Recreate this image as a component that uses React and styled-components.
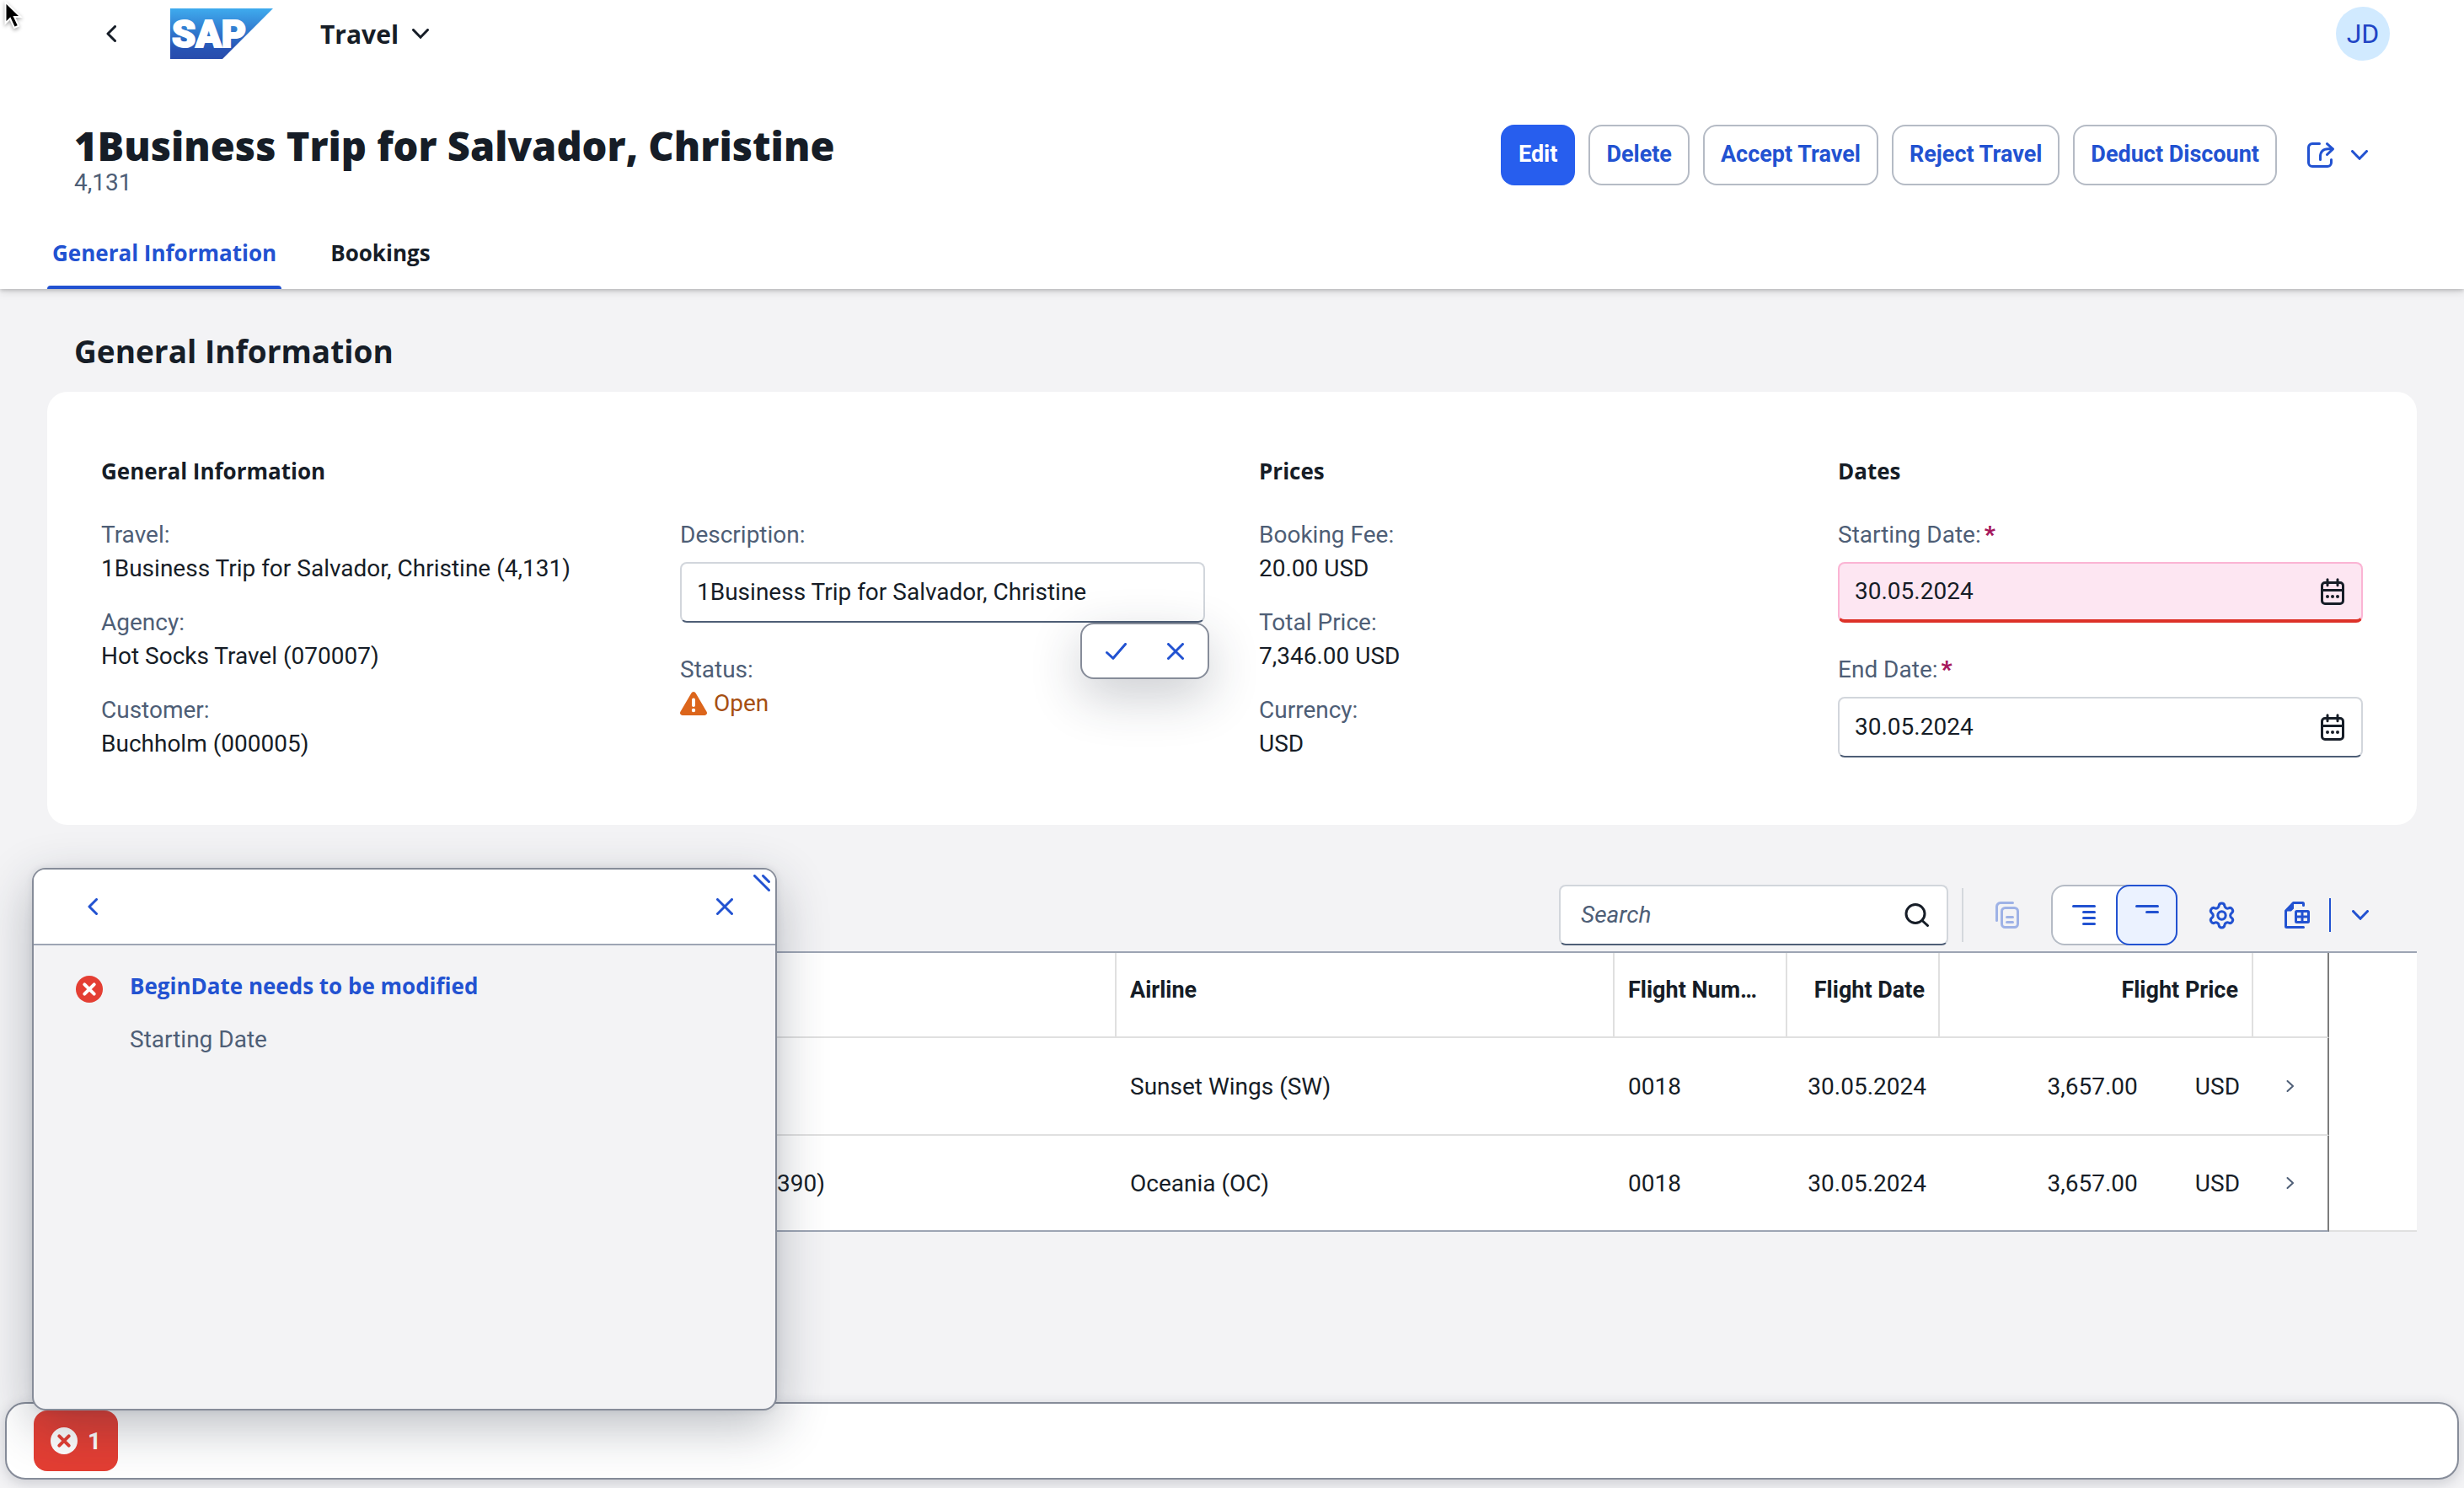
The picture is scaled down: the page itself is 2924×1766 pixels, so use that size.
import React, { useState } from "react";
import styled, { createGlobalStyle, css } from "styled-components";

const c = {
  page: "#f3f3f5",
  text: "#161d27",
  label: "#4e5e76",
  link: "#2252d1",
  brand: "#275eee",
  line: "#9da5b4",
  softLine: "#e0e0e0",
  fieldLine: "#d2d6dc",
  popLine: "#868c99",
  red: "#e43e33",
};

const headingFont = `"Open Sans", "Noto Sans", sans-serif`;

const GlobalStyle = createGlobalStyle`
  *, *::before, *::after { box-sizing: border-box; }
  body { margin: 0; background: ${c.page}; }
  body, button, input, table { font-family: Roboto, "Noto Sans", sans-serif; font-size: 28px; color: ${c.text}; }
  svg { display: block; flex: none; }
  h1, h2, h3, p, dl, dd { margin: 0; }
`;

/* ---------- icons ---------- */

const Stroke = ({ w, h, sw = 3, children }) => (
  <svg width={w} height={h} viewBox={`0 0 ${w} ${h}`} fill="none" stroke="currentColor" strokeWidth={sw} strokeLinecap="round" strokeLinejoin="round" aria-hidden="true">
    {children}
  </svg>
);

const ChevronDown = () => (
  <Stroke w={20} h={12}><path d="M1.5 1.5 10 10.3 18.5 1.5" /></Stroke>
);
const ChevronLeft = () => (
  <Stroke w={12} h={20}><path d="M10.5 1.5 2 10l8.500 8.500" /></Stroke>
);
const ChevronRight = () => (
  <Stroke w={10} h={16} sw={2}><path d="M1.500 2 8 8l-6.500 6" /></Stroke>
);
const CloseIcon = () => (
  <Stroke w={20} h={20}><path d="M1.500 1.500l17 17M18.500 1.500l-17 17" /></Stroke>
);
const CheckIcon = () => (
  <Stroke w={25} h={20}><path d="M1.500 11.500 9 18.300 23.500 1.500" /></Stroke>
);
const ShareIcon = () => (
  <Stroke w={32} h={30}>
    <path d="M14.500 1.500H6A4.500 4.500 0 0 0 1.500 6v18A4.500 4.500 0 0 0 6 28.500h18a4.500 4.500 0 0 0 4.500-4.500v-3.500" />
    <path d="M15.500 20.500V17c0-6 3.500-9.200 9-9.200H30" />
    <path d="M23.500 1.700 30.400 7.800 23.500 14.500" />
  </Stroke>
);
const CalendarIcon = () => (
  <Stroke w={28} h={32}>
    <rect x="1.500" y="5.500" width="25" height="25" rx="3.500" />
    <path d="M2 14.500h24M8 1.700v7M20 1.700v7" />
    <g fill="currentColor" stroke="none">
      <circle cx="8" cy="22" r="2" /><circle cx="14" cy="22" r="2" /><circle cx="20" cy="22" r="2" />
    </g>
  </Stroke>
);
const SearchIcon = () => (
  <Stroke w={30} h={28}>
    <circle cx="13" cy="12.500" r="11" /><path d="M21 20.500l6.500 6" />
  </Stroke>
);
const CopyIcon = () => (
  <Stroke w={28} h={32}>
    <path d="M1.500 22.500V6A4.500 4.500 0 0 1 6 1.500h14.500" />
    <rect x="7.500" y="7.500" width="19" height="23" rx="4" />
    <path d="M13.500 18.500h7M13.500 24.500h7" />
  </Stroke>
);
const ExpandTreeIcon = () => (
  <Stroke w={28} h={32}>
    <path d="M1.500 5.500h25M13.500 12.500h13M13.500 19.500h13M13.500 26.500h13" />
  </Stroke>
);
const CollapseTreeIcon = () => (
  <Stroke w={28} h={32}><path d="M1.500 5.500h25M13.500 12.500h13" /></Stroke>
);
const GearIcon = () => (
  <svg width="35" height="35" viewBox="0 0 24 24" fill="none" stroke="currentColor" strokeWidth="2.1" strokeLinecap="round" strokeLinejoin="round" aria-hidden="true">
    <path d="M9.671 4.136a2.340 2.340 0 0 1 4.659 0 2.340 2.340 0 0 0 3.319 1.915 2.340 2.340 0 0 1 2.330 4.033 2.340 2.340 0 0 0 0 3.831 2.340 2.340 0 0 1-2.330 4.033 2.340 2.340 0 0 0-3.319 1.915 2.340 2.340 0 0 1-4.659 0 2.340 2.340 0 0 0-3.320-1.915 2.340 2.340 0 0 1-2.330-4.033 2.340 2.340 0 0 0 0-3.831A2.340 2.340 0 0 1 6.350 6.051a2.340 2.340 0 0 0 3.319-1.915" />
    <circle cx="12" cy="12" r="3.200" />
  </svg>
);
const ExportIcon = () => (
  <Stroke w={30} h={32}>
    <path d="M22.500 4.500v-2a1 1 0 0 0-1-1H10.500l-9 9.500v18.500a1 1 0 0 0 1 1h20" />
    <path d="M2 10.500h5.500l2.500-2.500V2.500z" fill="currentColor" strokeWidth="2" />
    <rect x="13.500" y="11.500" width="15" height="13" rx="1" />
    <path d="M21 11.500v13M13.500 18h15" />
  </Stroke>
);
const ResizeIcon = () => (
  <Stroke w={20} h={20}><path d="M1.500 1.500l17 17M11.500 1.500l7 7" /></Stroke>
);
const WarningIcon = () => (
  <svg width="32" height="28" viewBox="0 0 32 28" aria-hidden="true">
    <path d="M13.300 1.700a3.100 3.100 0 0 1 5.400 0l12.900 22.100A2.800 2.800 0 0 1 29.200 28H2.800a2.800 2.800 0 0 1-2.400-4.200z" fill="#dc651b" />
    <path d="M16 9.500v6.500" stroke="#fff" strokeWidth="4" strokeLinecap="round" />
    <circle cx="16" cy="22" r="2.200" fill="#fff" />
  </svg>
);
const ErrorIcon = ({ fill, mark }) => (
  <svg width="32" height="32" viewBox="0 0 32 32" aria-hidden="true">
    <circle cx="16" cy="16" r="16" fill={fill} />
    <path d="M10.300 10.300l11.400 11.400M21.700 10.300 10.300 21.700" stroke={mark} strokeWidth="4" strokeLinecap="round" />
  </svg>
);
const SapLogo = () => (
  <svg width="122" height="60" viewBox="0 0 122 60" role="img" aria-label="SAP">
    <defs>
      <linearGradient id="sap" x1="0" y1="0" x2="0" y2="1">
        <stop offset="0" stopColor="#3fabee" />
        <stop offset="0.500" stopColor="#2f74cb" />
        <stop offset="0.800" stopColor="#2753b4" />
        <stop offset="1" stopColor="#284cac" />
      </linearGradient>
    </defs>
    <path d="M0 0h122L62 60H0z" fill="url(#sap)" />
    <text x="2" y="46" fill="#fff" stroke="#fff" strokeWidth="2" fontFamily="Roboto, sans-serif" fontWeight="900" fontSize="45">SAP</text>
  </svg>
);

const Pointer = styled.svg`
  position: absolute;
  left: 4px;
  top: 0;
  z-index: 5;
  filter: drop-shadow(0 2px 2px rgba(0, 0, 0, 0.35));
`;

/* ---------- page frame ---------- */

const Page = styled.div`
  min-height: 100vh;
  display: flex;
  flex-direction: column;
  background: ${c.page};
`;

const Header = styled.header`
  background: #fff;
  box-shadow: 0 2px 4px rgba(0, 0, 0, 0.16), 0 4px 10px rgba(0, 0, 0, 0.1);
`;

const ShellBar = styled.div`
  display: flex;
  align-items: center;
  height: 80px;
  padding: 0 88px 0 108px;
`;

const PlainButton = styled.button`
  display: flex;
  align-items: center;
  justify-content: ${(p) => p.$align || "center"};
  width: ${(p) => p.$width || "auto"};
  height: ${(p) => p.$height || "72px"};
  padding: 0;
  border: 0;
  background: none;
  color: ${(p) => p.$color || c.link};
  opacity: ${(p) => (p.disabled ? 0.4 : 1)};
`;

const LogoLink = styled.a`
  margin: 0 56px 0 46px;
`;

const AppMenu = styled.button`
  display: flex;
  align-items: center;
  gap: 16px;
  padding: 0;
  border: 0;
  background: none;
  font-family: ${headingFont};
  font-size: 30px;
  font-weight: 700;
`;

const Avatar = styled.button`
  width: 64px;
  height: 64px;
  margin-left: auto;
  padding: 0;
  border: 0;
  border-radius: 50%;
  background: #d1eaff;
  color: #2145c5;
  font-size: 32px;
`;

const TitleRow = styled.div`
  display: flex;
  justify-content: space-between;
  align-items: flex-start;
  padding: 65px 88px 0;
`;

const Title = styled.h1`
  font-family: ${headingFont};
  font-size: 47px;
  line-height: 56px;
  font-weight: 800;
`;

const Subtitle = styled.p`
  line-height: 32px;
  color: ${c.label};
`;

const Actions = styled.div`
  display: flex;
  gap: 16px;
  padding-top: 3px;
`;

const ShareGroup = styled.div`
  display: flex;
`;

const ActionButton = styled.button`
  height: 72px;
  padding: 0 19px 2px;
  border: 2px solid ${(p) => (p.$primary ? c.brand : "#b5bbc5")};
  border-radius: 16px;
  background: ${(p) => (p.$primary ? c.brand : "#fff")};
  color: ${(p) => (p.$primary ? "#fff" : c.link)};
  font-size: 27px;
  font-weight: 700;
  white-space: nowrap;
`;

const Tabs = styled.nav`
  display: flex;
  gap: 52px;
  padding: 24px 56px 0;
`;

const Tab = styled.a`
  position: relative;
  padding: 0 6px;
  line-height: 86px;
  font-family: ${headingFont};
  font-size: 26px;
  font-weight: 700;
  text-decoration: none;
  color: ${(p) => (p.$active ? c.link : c.text)};
  ${(p) => p.$active && css`
    &::after {
      content: "";
      position: absolute;
      inset: auto 0 0;
      height: 4px;
      border-radius: 4px 4px 0 0;
      background: ${c.link};
    }
  `}
`;

/* ---------- general information ---------- */

const Main = styled.main`
  flex: 1;
  padding: 50px 56px 0;
`;

const SectionTitle = styled.h2`
  padding-left: 32px;
  margin-bottom: 24px;
  font-family: ${headingFont};
  font-size: 37px;
  font-weight: 700;
  line-height: 48px;
`;

const Card = styled.section`
  display: grid;
  grid-template-columns: 2fr 1fr 1fr;
  padding: 74px 32px 76px;
  border-radius: 24px;
  background: #fff;
`;

const Group = styled.div`
  min-width: 0;
`;

const GroupTitle = styled.h3`
  padding: 0 32px;
  margin-bottom: 36px;
  font-family: ${headingFont};
  font-size: 26px;
  font-weight: 700;
  line-height: 40px;
`;

const GroupColumns = styled.div`
  display: grid;
  grid-template-columns: repeat(${(p) => p.$count}, 1fr);
`;

const FieldList = styled.div`
  display: flex;
  flex-direction: column;
  gap: ${(p) => (p.$editable ? "36px" : "24px")};
  padding: 0 32px;
`;

const Field = styled.div`
  position: relative;
  line-height: 40px;
`;

const Label = styled.label`
  display: block;
  margin-bottom: ${(p) => (p.$editable ? "12px" : "0")};
  color: ${c.label};
`;

const Required = styled.span`
  margin-left: 4px;
  color: #a6175c;
  font-weight: 900;
`;

const InputFrame = styled.div`
  display: flex;
  align-items: center;
  height: 72px;
  padding: 0 20px 0 18px;
  border: 2px solid ${c.fieldLine};
  border-bottom-color: ${c.label};
  border-radius: 8px;
  background: #fff;
  ${(p) => p.$error && css`
    border-color: #fbb4d4;
    border-bottom: 4px solid #dd3128;
    background: #fde6f2;
  `}
`;

const TextInput = styled.input`
  flex: 1;
  min-width: 0;
  padding: 0 0 2px;
  border: 0;
  outline: 0;
  background: none;
  &::placeholder { color: ${c.label}; font-style: italic; opacity: 1; }
`;

const Status = styled.div`
  display: flex;
  align-items: center;
  gap: 8px;
  color: #a64f12;
`;

const ConfirmPopover = styled.div`
  position: absolute;
  top: 100%;
  right: -5px;
  z-index: 1;
  display: flex;
  padding: 0 4px;
  border: 2px solid ${c.popLine};
  border-radius: 16px;
  background: #fff;
  box-shadow: 0 20px 60px rgba(34, 42, 60, 0.24);
`;

/* ---------- bookings ---------- */

const Toolbar = styled.div`
  display: flex;
  align-items: center;
  justify-content: flex-end;
  gap: 16px;
  margin-top: 71px;
  padding: 0 32px 7px 0;
`;

const SearchFrame = styled(InputFrame)`
  width: 462px;
  padding-left: 24px;
`;

const Separator = styled.span`
  width: 2px;
  height: ${(p) => p.$height};
  background: ${(p) => p.$color};
`;

const Segments = styled.div`
  display: flex;
  border-radius: 16px;
  background: #fff;
  box-shadow: inset 0 0 0 2px #b5bbc5;
`;

const Segment = styled.button`
  display: flex;
  align-items: center;
  justify-content: center;
  width: ${(p) => (p.$selected ? "73px" : "77px")};
  height: 72px;
  padding: 0;
  border: 2px solid ${(p) => (p.$selected ? c.link : "transparent")};
  border-radius: 16px;
  background: ${(p) => (p.$selected ? "#ebf2ff" : "none")};
  color: ${c.link};
`;

const ExportGroup = styled.div`
  display: flex;
  align-items: center;
`;

const Table = styled.table`
  width: 100%;
  table-layout: fixed;
  border-collapse: separate;
  border-spacing: 0;
  border-top: 2px solid ${c.line};
  background: #fff;
`;

const Col = styled.col`
  width: ${(p) => p.$width};
`;

const HeadCell = styled.th`
  height: 101px;
  padding: 0 ${(p) => (p.$end ? "16px" : "24px")} 12px 16px;
  border-bottom: 2px solid ${(p) => (p.$blank ? "transparent" : c.softLine)};
  border-right: ${(p) => (p.$blank ? "0" : `2px solid ${p.$last ? "#7d7d7d" : c.softLine}`)};
  font-size: 27px;
  font-weight: 700;
  text-align: ${(p) => (p.$end ? "right" : "left")};
  white-space: nowrap;
  overflow: hidden;
  text-overflow: ellipsis;
`;

const Cell = styled.td`
  height: ${(p) => (p.$bottom ? "114px" : "116px")};
  padding: 0 16px;
  border-bottom: 2px solid ${(p) => (p.$bottom ? (p.$blank ? c.softLine : c.line) : p.$blank ? "transparent" : c.softLine)};
  border-right: ${(p) => (p.$last ? "2px solid #7d7d7d" : "0")};
  text-align: ${(p) => (p.$end ? "right" : "left")};
  white-space: nowrap;
`;

const CustomerCell = styled(Cell)`
  padding-right: 346px;
`;

const Amount = styled.span`
  display: flex;
  justify-content: flex-end;
  gap: 68px;
`;

/* ---------- footer & messages ---------- */

const Footer = styled.footer`
  display: flex;
  align-items: flex-start;
  height: 92px;
  margin: 0 6px 10px;
  padding: 8px 32px;
  border: 2px solid ${c.popLine};
  border-radius: 24px;
  background: #fff;
  box-shadow: 0 4px 16px rgba(34, 42, 60, 0.2);
`;

const MessageAnchor = styled.div`
  position: relative;
`;

const MessageButton = styled.button`
  display: flex;
  align-items: center;
  gap: 12px;
  height: 72px;
  padding: 0 20px;
  border: 0;
  border-radius: 16px;
  background: ${c.red};
  color: #fff;
  font-weight: 700;
`;

const MessagePopover = styled.section`
  position: absolute;
  left: -2px;
  bottom: 100%;
  z-index: 2;
  width: 884px;
  height: 644px;
  border: 2px solid ${c.popLine};
  border-radius: 16px;
  background: ${c.page};
  box-shadow: 0 20px 60px rgba(34, 42, 60, 0.3), 0 0 8px rgba(34, 42, 60, 0.1);
  overflow: hidden;
`;

const MessageLayer = styled.div`
  display: flex;
  flex-direction: column;
  height: 100%;
`;

const MessageHeader = styled.div`
  display: flex;
  justify-content: space-between;
  height: 90px;
  padding: 0 24px 0 34px;
  border-bottom: 2px solid ${c.line};
  background: #fff;
`;

const ResizeHandle = styled.span`
  position: absolute;
  top: 6px;
  right: 6px;
  color: ${c.link};
`;

const MessageItem = styled.div`
  display: flex;
  gap: 32px;
  padding: 32px 50px;
`;

const MessageIcon = styled.span`
  padding-top: 4px;
`;

const MessageLink = styled.a`
  display: block;
  line-height: 32px;
  margin-bottom: 32px;
  color: ${c.link};
  font-family: ${headingFont};
  font-size: 26px;
  font-weight: 700;
  text-decoration: none;
`;

const MessageNote = styled.p`
  line-height: 32px;
  color: ${c.label};
`;

/* ---------- parts ---------- */

const ReadField = ({ label, children }) => (
  <Field>
    <Label as="div">{label}:</Label>
    <div>{children}</div>
  </Field>
);

const DateField = ({ id, label, error, initial }) => {
  const [value, setValue] = useState(initial);
  return (
    <Field>
      <Label htmlFor={id} $editable>{label}:<Required>*</Required></Label>
      <InputFrame $error={error}>
        <TextInput id={id} value={value} onChange={(e) => setValue(e.target.value)} aria-invalid={error} />
        <PlainButton $color={c.text} $height="64px" aria-label={`Open calendar for ${label}`}><CalendarIcon /></PlainButton>
      </InputFrame>
    </Field>
  );
};

const bookings = [
  { customer: "", airline: "Sunset Wings (SW)", number: "0018", date: "30.05.2024", price: "3,657.00", currency: "USD" },
  { customer: "(000390)", airline: "Oceania (OC)", number: "0018", date: "30.05.2024", price: "3,657.00", currency: "USD" },
];

export default function App() {
  const [description, setDescription] = useState("1Business Trip for Salvador, Christine");
  return (
    <Page>
      <GlobalStyle />
      <Pointer width="28" height="40" viewBox="0 0 28 40" aria-hidden="true">
        <path d="M2.500 2.500v25l5.500-5.500 5 11 5-2.300-5-10.700h7.500z" fill="#000" stroke="#fff" strokeWidth="2" />
      </Pointer>
      <Header>
        <ShellBar>
          <PlainButton $color={c.text} $width="48px" aria-label="Back"><ChevronLeft /></PlainButton>
          <LogoLink href="#home"><SapLogo /></LogoLink>
          <AppMenu>Travel<ChevronDown /></AppMenu>
          <Avatar aria-label="Profile">JD</Avatar>
        </ShellBar>
        <TitleRow>
          <div>
            <Title>1Business Trip for Salvador, Christine</Title>
            <Subtitle>4,131</Subtitle>
          </div>
          <Actions>
            <ActionButton $primary>Edit</ActionButton>
            <ActionButton>Delete</ActionButton>
            <ActionButton>Accept Travel</ActionButton>
            <ActionButton>Reject Travel</ActionButton>
            <ActionButton>Deduct Discount</ActionButton>
            <ShareGroup>
              <PlainButton $width="72px" aria-label="Share"><ShareIcon /></PlainButton>
              <PlainButton $width="46px" $align="flex-start" aria-label="More share options"><ChevronDown /></PlainButton>
            </ShareGroup>
          </Actions>
        </TitleRow>
        <Tabs>
          <Tab href="#general" $active>General Information</Tab>
          <Tab href="#bookings">Bookings</Tab>
        </Tabs>
      </Header>

      <Main>
        <SectionTitle id="general">General Information</SectionTitle>
        <Card>
          <Group>
            <GroupTitle>General Information</GroupTitle>
            <GroupColumns $count={2}>
              <FieldList>
                <ReadField label="Travel">1Business Trip for Salvador, Christine (4,131)</ReadField>
                <ReadField label="Agency">Hot Socks Travel (070007)</ReadField>
                <ReadField label="Customer">Buchholm (000005)</ReadField>
              </FieldList>
              <FieldList $editable>
                <Field>
                  <Label htmlFor="description" $editable>Description:</Label>
                  <InputFrame>
                    <TextInput id="description" value={description} onChange={(e) => setDescription(e.target.value)} />
                  </InputFrame>
                  <ConfirmPopover>
                    <PlainButton $width="73px" $height="63px" aria-label="Apply"><CheckIcon /></PlainButton>
                    <PlainButton $width="68px" $height="63px" aria-label="Discard"><CloseIcon /></PlainButton>
                  </ConfirmPopover>
                </Field>
                <ReadField label="Status"><Status><WarningIcon />Open</Status></ReadField>
              </FieldList>
            </GroupColumns>
          </Group>
          <Group>
            <GroupTitle>Prices</GroupTitle>
            <FieldList>
              <ReadField label="Booking Fee">20.00 USD</ReadField>
              <ReadField label="Total Price">7,346.00 USD</ReadField>
              <ReadField label="Currency">USD</ReadField>
            </FieldList>
          </Group>
          <Group>
            <GroupTitle>Dates</GroupTitle>
            <FieldList $editable>
              <DateField id="start" label="Starting Date" initial="30.05.2024" error />
              <DateField id="end" label="End Date" initial="30.05.2024" />
            </FieldList>
          </Group>
        </Card>

        <Toolbar id="bookings">
          <SearchFrame>
            <TextInput type="text" placeholder="Search" aria-label="Search" />
            <PlainButton $color={c.text} $height="64px" aria-label="Start search"><SearchIcon /></PlainButton>
          </SearchFrame>
          <Separator $height="64px" $color="#d5d8dd" />
          <PlainButton $width="72px" disabled aria-label="Copy"><CopyIcon /></PlainButton>
          <Segments>
            <Segment aria-label="Show more columns"><ExpandTreeIcon /></Segment>
            <Segment $selected aria-label="Show fewer columns"><CollapseTreeIcon /></Segment>
          </Segments>
          <PlainButton $width="72px" aria-label="Settings"><GearIcon /></PlainButton>
          <ExportGroup>
            <PlainButton $width="76px" aria-label="Export"><ExportIcon /></PlainButton>
            <Separator $height="40px" $color={c.link} />
            <PlainButton $width="70px" aria-label="Export options"><ChevronDown /></PlainButton>
          </ExportGroup>
        </Toolbar>

        <Table>
          <colgroup>
            <Col />
            <Col $width="591px" />
            <Col $width="205px" />
            <Col $width="181px" />
            <Col $width="372px" />
            <Col $width="90px" />
            <Col $width="104px" />
          </colgroup>
          <thead>
            <tr>
              <HeadCell />
              <HeadCell>Airline</HeadCell>
              <HeadCell>Flight Number</HeadCell>
              <HeadCell $end>Flight Date</HeadCell>
              <HeadCell $end>Flight Price</HeadCell>
              <HeadCell $last />
              <HeadCell $blank />
            </tr>
          </thead>
          <tbody>
            {bookings.map((b, i) => {
              const bottom = i === bookings.length - 1;
              return (
                <tr key={b.airline}>
                  <CustomerCell $bottom={bottom} $end>{b.customer}</CustomerCell>
                  <Cell $bottom={bottom}>{b.airline}</Cell>
                  <Cell $bottom={bottom}>{b.number}</Cell>
                  <Cell $bottom={bottom} $end>{b.date}</Cell>
                  <Cell $bottom={bottom} $end><Amount><span>{b.price}</span><span>{b.currency}</span></Amount></Cell>
                  <Cell $bottom={bottom} $last>
                    <PlainButton $width="56px" $color={c.label} aria-label={`Open ${b.airline}`}><ChevronRight /></PlainButton>
                  </Cell>
                  <Cell $bottom={bottom} $blank />
                </tr>
              );
            })}
          </tbody>
        </Table>
      </Main>

      <Footer>
        <MessageAnchor>
          <MessageButton aria-label="1 error"><ErrorIcon fill="#fff" mark={c.red} />1</MessageButton>
          <MessagePopover>
            <MessageLayer>
              <MessageHeader>
                <PlainButton $width="72px" $height="88px" aria-label="Back to messages"><ChevronLeft /></PlainButton>
                <PlainButton $width="72px" $height="88px" aria-label="Close"><CloseIcon /></PlainButton>
              </MessageHeader>
              <MessageItem>
                <MessageIcon><ErrorIcon fill={c.red} mark="#fff" /></MessageIcon>
                <div>
                  <MessageLink href="#start">BeginDate needs to be modified</MessageLink>
                  <MessageNote>Starting Date</MessageNote>
                </div>
              </MessageItem>
            </MessageLayer>
            <ResizeHandle><ResizeIcon /></ResizeHandle>
          </MessagePopover>
        </MessageAnchor>
      </Footer>
    </Page>
  );
}
